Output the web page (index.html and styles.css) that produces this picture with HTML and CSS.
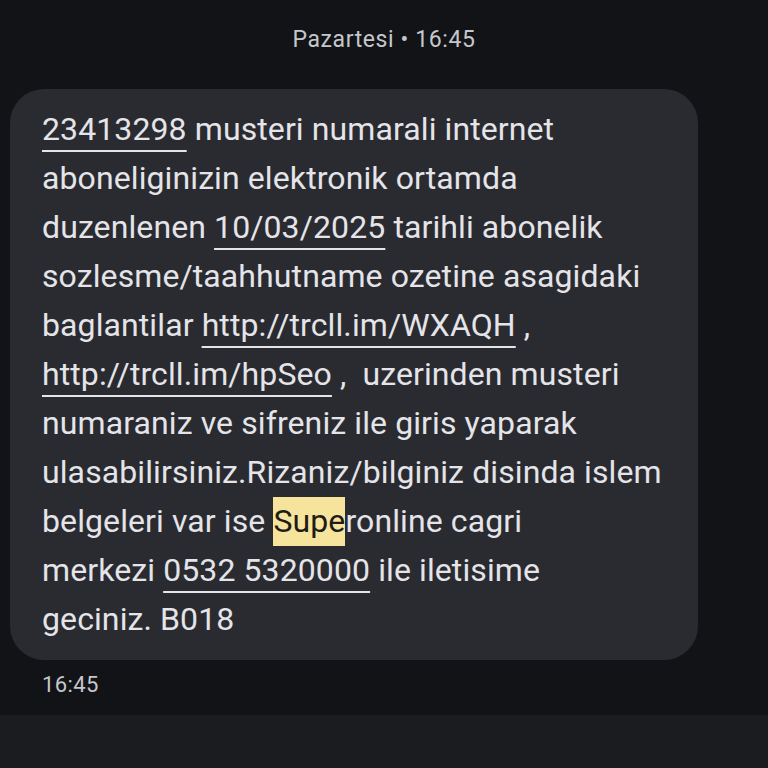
FILE: index.html
```html
<!DOCTYPE html>
<html lang="tr">
<head>
<meta charset="utf-8">
<link rel="stylesheet" href="styles.css">
</head>
<body>
<div class="screen">
  <div class="date">Pazartesi • 16:45</div>
  <div class="bubble">
    <p class="msg"><span class="link">23413298</span> musteri numarali internet<br>aboneliginizin elektronik ortamda<br>duzenlenen <span class="link">10/03/2025</span> tarihli abonelik<br>sozlesme/taahhutname ozetine asagidaki<br>baglantilar <span class="link">http://trcll.im/WXAQH</span> ,<br><span class="link">http://trcll.im/hpSeo</span> ,&nbsp; uzerinden musteri<br>numaraniz ve sifreniz ile giris yaparak<br>ulasabilirsiniz.Rizaniz/bilginiz disinda islem<br>belgeleri var ise <mark class="hl">Supe</mark>ronline cagri<br>merkezi <span class="link">0532 5320000</span> ile iletisime<br>geciniz. B018</p>
  </div>
  <div class="time">16:45</div>
  <div class="footer"></div>
</div>
</body>
</html>
```
FILE: styles.css
```css
html, body {
  margin: 0;
  padding: 0;
  background: #121317;
}
.screen {
  width: 768px;
  height: 768px;
  display: flex;
  flex-direction: column;
  font-family: Roboto, "Liberation Sans", sans-serif;
  color: #e4e4e9;
  overflow: hidden;
}
.date {
  height: 80px;
  line-height: 80px;
  text-align: center;
  font-size: 23px;
  letter-spacing: 0.6px;
  color: #c6c7cc;
  flex: none;
}
.bubble {
  margin: 9px 0 0 10px;
  width: 688px;
  box-sizing: border-box;
  padding: 16px 20px 16px 32px;
  background: #2a2b30;
  border-radius: 34px;
  flex: none;
}
.msg {
  margin: 0;
  font-size: 32px;
  letter-spacing: 0.1px;
  line-height: 49px;
  white-space: nowrap;
}
.link {
  text-decoration: underline;
  text-decoration-thickness: 2px;
  text-underline-offset: 10px;
}
.hl {
  background: #f7e49c;
  color: #1d1c17;
  display: inline-block;
  line-height: 49px;
}
.time {
  padding-left: 42px;
  font-size: 22px;
  letter-spacing: 0.4px;
  color: #c6c7cc;
  height: 55px;
  line-height: 50px;
  flex: none;
}
.footer {
  flex: 1;
  background: #1b1c20;
}
```
